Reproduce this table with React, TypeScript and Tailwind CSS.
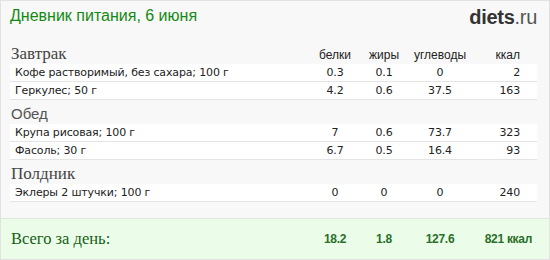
import React from 'react';

type Item = { name: string; p: string; f: string; c: string; k: string };

const meals: { title: string; sans?: boolean; items: Item[] }[] = [
  {
    title: 'Завтрак',
    items: [
      { name: 'Кофе растворимый, без сахара; 100 г', p: '0.3', f: '0.1', c: '0', k: '2' },
      { name: 'Геркулес; 50 г', p: '4.2', f: '0.6', c: '37.5', k: '163' },
    ],
  },
  {
    title: 'Обед',
    sans: true,
    items: [
      { name: 'Крупа рисовая; 100 г', p: '7', f: '0.6', c: '73.7', k: '323' },
      { name: 'Фасоль; 30 г', p: '6.7', f: '0.5', c: '16.4', k: '93' },
    ],
  },
  {
    title: 'Полдник',
    items: [{ name: 'Эклеры 2 штучки; 100 г', p: '0', f: '0', c: '0', k: '240' }],
  },
];

const serif = "font-['Liberation_Serif',serif]";

const Row = ({ item }: { item: Item }) => (
  <div className="flex h-[18px] items-center border-b border-[#e4e4e4] bg-white pl-[5px] pr-[17px] font-['DejaVu_Sans',sans-serif] text-[11px] leading-[17px] tracking-[-0.15px] text-[#222]">
    <div className="flex-1">{item.name}</div>
    <div className="w-[50px] text-center">{item.p}</div>
    <div className="w-[48px] text-center">{item.f}</div>
    <div className="w-[64px] text-center">{item.c}</div>
    <div className="w-[48px] text-right">{item.k}</div>
  </div>
);

export default function App() {
  return (
    <div className="box-border flex h-[260px] w-[550px] flex-col border border-[#e2e2e2] bg-[#f8f8f8]">
      {/* Header */}
      <div className="flex h-[35px] items-start justify-between pl-[9px] pr-[12px] pt-[5px]">
        <div className="font-['Liberation_Sans',sans-serif] text-[16px] leading-[20px] text-[#138a13]">
          Дневник питания, 6 июня
        </div>
        <div className="font-['Liberation_Sans',sans-serif] text-[20px] leading-[22px] tracking-[-0.3px]">
          <span className="font-bold text-[#333]">diets</span>
          <span className="text-[#555]">.ru</span>
        </div>
      </div>

      <div className="pl-[9px] pr-[12px]">
        {meals.map((meal, i) => (
          <div key={meal.title}>
            <div className={`flex items-end ${i === 0 ? 'h-[28px]' : 'h-[24px]'}`}>
              <div
                className={`flex-1 pl-[1px] leading-[20px] ${
                  meal.sans
                    ? "font-['Liberation_Sans',sans-serif] text-[15px] text-[#555]"
                    : `${serif} text-[17px] text-[#444]`
                }`}
              >
                {meal.title}
              </div>
              {i === 0 && (
                <div className="flex pr-[17px] font-['Liberation_Sans',sans-serif] text-[12px] leading-[18px] text-[#222]">
                  <div className="w-[50px] text-center">белки</div>
                  <div className="w-[48px] text-center">жиры</div>
                  <div className="w-[64px] text-center">углеводы</div>
                  <div className="w-[48px] text-right">ккал</div>
                </div>
              )}
            </div>
            {meal.items.map((item) => (
              <Row key={item.name} item={item} />
            ))}
          </div>
        ))}
      </div>

      {/* Totals */}
      <div className="mt-auto flex h-[41px] items-center border-t border-[#dde8dd] bg-[#ebfde9] pl-[10px] pr-[17px]">
        <div className={`flex-1 ${serif} text-[16.5px] leading-[20px] text-[#155e15]`}>Всего за день:</div>
        <div className="flex font-['Liberation_Sans',sans-serif] text-[12px] font-bold tracking-[-0.3px] text-[#2a6f2a]">
          <div className="w-[50px] text-center">18.2</div>
          <div className="w-[48px] text-center">1.8</div>
          <div className="w-[64px] text-center">127.6</div>
          <div className="w-[60px] text-right">821 ккал</div>
        </div>
      </div>
    </div>
  );
}
